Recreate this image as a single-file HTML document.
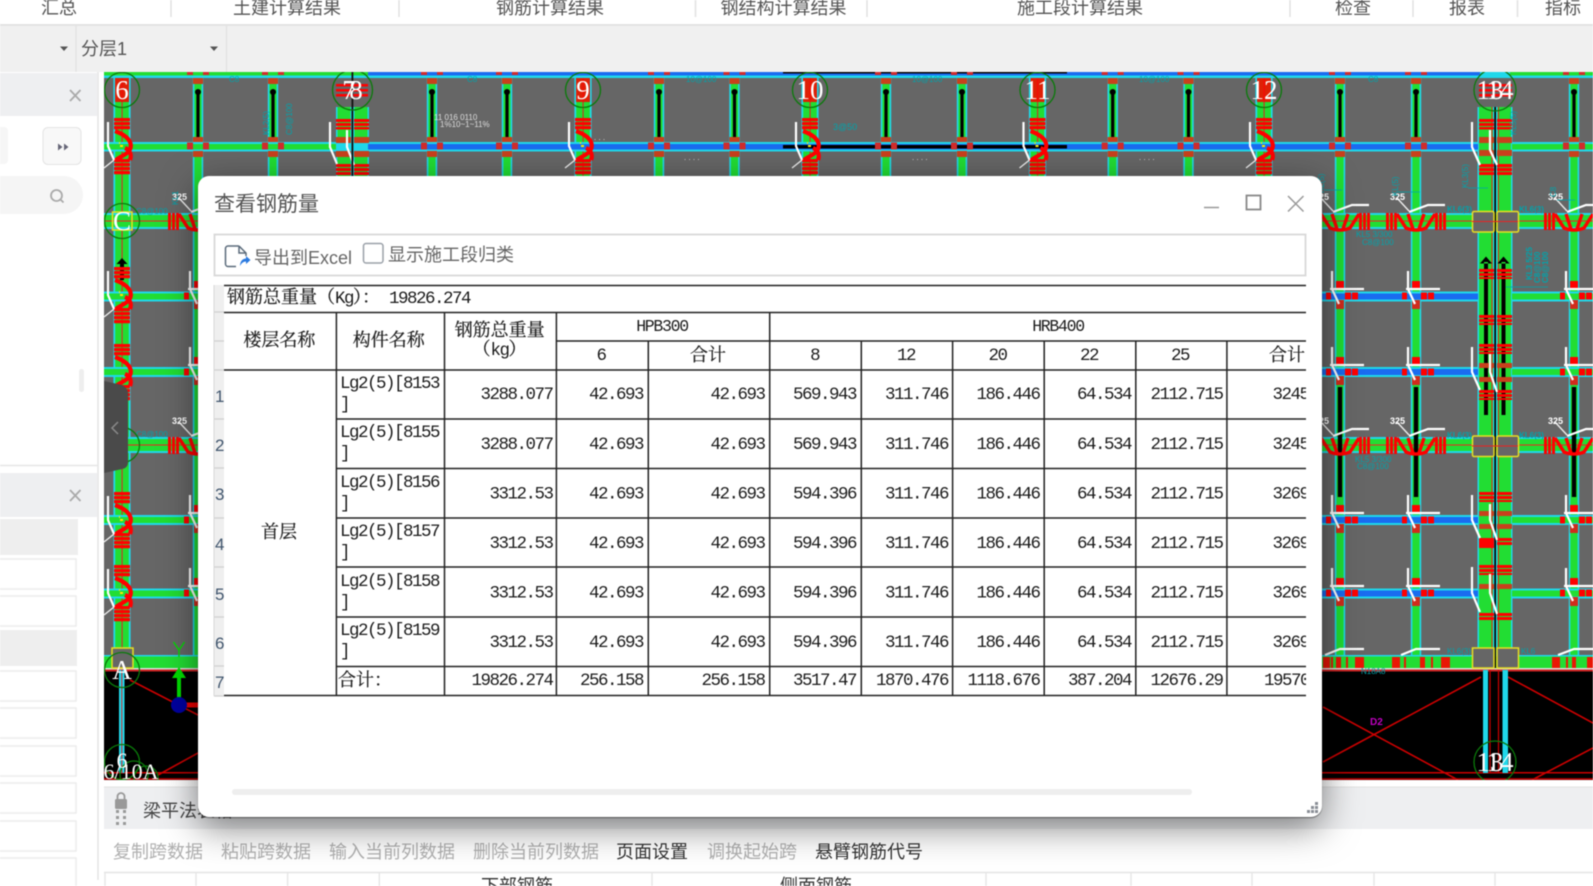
<!DOCTYPE html>
<html lang="zh-CN">
<head>
<meta charset="utf-8">
<title>查看钢筋量</title>
<style>
html,body{margin:0;padding:0;width:1593px;height:886px;overflow:hidden;background:#fff}
#root{position:relative;width:1593px;height:886px;overflow:hidden;filter:blur(.45px)}
svg.layer{position:absolute;left:0;top:0}
#dlg{position:absolute;left:198px;top:176px;width:1124px;height:641px;background:#fff;border-radius:11px;box-shadow:0 10px 36px rgba(0,0,0,.5),0 1px 1px rgba(0,0,0,.45)}
.ui{font-family:"Liberation Sans","Noto Sans CJK SC",sans-serif;font-size:18px}
.tab{fill:#555;text-anchor:middle}
.off{fill:#b0b0b0}.on{fill:#333}
.m{font-family:"Liberation Mono",monospace;font-size:17.5px;letter-spacing:-1.5px;fill:#1c1c1c}
.c{font-family:"Liberation Serif","Noto Serif CJK SC",serif;font-size:18px;fill:#222;stroke:#222;stroke-width:.25px}
.c .m{stroke:none}
.r{text-anchor:end}.mid{text-anchor:middle}
.ax{font-family:"Liberation Serif",serif;font-size:27px;fill:#fff;text-anchor:middle}
.ns{font-family:"Liberation Sans",sans-serif;font-size:8px;fill:#00a4ac}
.nw{font-family:"Liberation Sans",sans-serif;font-size:8px;fill:#ddd}
</style>
</head>
<body>
<div id="root">
<svg class="layer" width="1593" height="886" viewBox="0 0 1593 886">
<defs>
<clipPath id="cv"><rect x="104" y="72" width="1489" height="708"/></clipPath>
<g id="c"><rect x="-5.200" y="72" width="10.400" height="586" fill="#20d8ea"/><rect x="-3.600" y="72" width="7.200" height="586" fill="#22dd33"/></g>
<g id="a"><rect x="-8.600" y="72" width="17.200" height="586" fill="#20d8ea"/><rect x="-6.800" y="72" width="13.600" height="586" fill="#22dd33"/><rect x="-.4" y="72" width="1" height="586" fill="#d22"/><rect x="-7" y="74" width="14" height="28" fill="#f00" opacity=".85"/></g>
<g id="bar"><rect x="-1.600" y="92" width="3.200" height="47" fill="#000"/><circle cy="92" r="3" fill="#000"/><rect x="-5" y="78" width="10" height="6" fill="#c8401c"/><rect x="-5" y="137" width="10" height="5" fill="#c8401c"/><rect x="-5" y="151" width="10" height="6" fill="#c8401c"/></g>
<g id="j"><rect x="-11" y="-3.500" width="6" height="7" fill="#d02c2c"/><rect x="5" y="-3.500" width="6" height="7" fill="#d02c2c"/><rect x="-11" y="-74" width="6" height="3" fill="#d02c2c"/><rect x="5" y="-74" width="6" height="3" fill="#d02c2c"/></g>
<g id="s"><path d="M-8-28h16v3.200h-16zM-8-24h16v3.200h-16zM-8-20h16v3.200h-16zM-8 13h16v3.200h-16zM-8 17h16v3.200h-16zM-8 21h16v3.200h-16zM-8 25h16v3.200h-16z" fill="#f00"/><path d="M-7-15C9-9 11-1 7 5C3 10-4 11-7 15M8 14C10 9 8 4 3 2" fill="none" stroke="#f00" stroke-width="4.200"/></g>
<g id="h"><path d="M-14-24V0L-8 14" fill="none" stroke="#fff" stroke-width="2.200"/><path d="M-8 14L-18 22" stroke="#eee" stroke-width="1.400"/><path d="M-3-3h1M-2 0h3" stroke="#ffe800" stroke-width="2"/></g>
<g id="t"><path d="M-30-8h3v17h-3zM-26-8h3v17h-3zM-22-8h3v17h-3zM19-8h3v17h-3zM23-8h3v17h-3zM27-8h3v17h-3z" fill="#f00"/><path d="M-19-7L-10 7Q0 11 10 7L19-7M-8-7L-3 8M8-7L3 8" fill="none" stroke="#f00" stroke-width="3.400"/><path d="M-7-9L12-16H29" fill="none" stroke="#fff" stroke-width="2.200"/><path d="M-19-23L-7-10" stroke="#eee" stroke-width="1.400"/><text x="-26" y="-21" font-family="Liberation Sans,sans-serif" font-size="9" fill="#fff" font-weight="bold">325</text></g>
<g id="u"><rect x="-14" y="-3.500" width="5" height="7" fill="#f00"/><rect x="5" y="-3.500" width="6" height="7" fill="#f00"/><rect x="12" y="-3.500" width="6" height="7" fill="#f00"/><rect x="-4" y="-15" width="8" height="8" fill="#f00"/><rect x="-4" y="4" width="8" height="9" fill="#d02c1c"/><path d="M-8-25V-7L-1 8M-10-7H24" fill="none" stroke="#fff" stroke-width="2.200"/></g>
</defs>

<!-- top tabs -->
<rect width="1593" height="24" fill="#fff"/>
<g class="ui">
<text class="tab" x="59" y="14">汇总</text><text class="tab" x="287" y="14">土建计算结果</text><text class="tab" x="550" y="14">钢筋计算结果</text><text class="tab" x="783.500" y="14">钢结构计算结果</text><text class="tab" x="1080" y="14">施工段计算结果</text><text class="tab" x="1353" y="14">检查</text><text class="tab" x="1467" y="14">报表</text><text class="tab" x="1563" y="14">指标</text>
</g>
<path d="M171 0V17M399 0V17M695.500 0V17M867 0V17M1290 0V17M1413 0V17M1517.500 0V17" stroke="#e2e2e2" stroke-width="1.500"/>
<rect y="24" width="1593" height="2" fill="#e3e3e3"/>
<rect y="26" width="1593" height="46" fill="#f0f0f0"/>
<path d="M76 26V72M226.500 26V72" stroke="#e0e0e0" stroke-width="1.200"/>
<text class="ui" x="81" y="55" fill="#555">分层1</text>
<path d="M60 46.500h8l-4 4.500zM210 46.500h8l-4 4.500z" fill="#555"/>

<!-- left side -->
<rect y="72" width="104" height="814" fill="#fff"/>
<rect y="73" width="97" height="43" fill="#eeeff1"/>
<rect y="473" width="97" height="44" fill="#eeeff1"/>
<path d="M70 90l10.500 11M80.500 90L70 101M70 490l10.500 11M80.500 490L70 501" stroke="#aaa" stroke-width="1.800"/>
<rect x="-6" y="127" width="14" height="37" rx="4" fill="#f6f6f6"/>
<rect x="43" y="127.500" width="38" height="37" rx="5" fill="#f8f8f8" stroke="#e4e4e4"/>
<path d="M58 143.500l4.500 3.500-4.500 3.500zM64 143.500l4.500 3.500-4.500 3.500z" fill="#667"/>
<rect x="-20" y="176" width="103" height="38" rx="19" fill="#f5f5f5"/>
<circle cx="56.500" cy="195.500" r="5.500" fill="none" stroke="#aaa" stroke-width="1.800"/><path d="M60.500 199.500l3 3" stroke="#aaa" stroke-width="1.800"/>
<rect x="79" y="369" width="5" height="23" rx="2.500" fill="#eee"/>
<path d="M0 465.500H97.500M98 72V880" stroke="#e6e6e6" stroke-width="1.600"/>
<rect y="519" width="78" height="36" fill="#eee"/>
<rect y="630" width="77" height="36" fill="#eee"/>
<g fill="#fff" stroke="#ececec" stroke-width="1.500">
<rect x="-5" y="559" width="81" height="30"/><rect x="-5" y="596" width="81" height="30"/><rect x="-5" y="671" width="81" height="30"/><rect x="-5" y="708" width="81" height="30"/><rect x="-5" y="746" width="81" height="30"/><rect x="-5" y="783" width="81" height="30"/><rect x="-5" y="821" width="81" height="30"/><rect x="-5" y="858" width="81" height="40"/>
</g>

<!-- canvas -->
<g clip-path="url(#cv)">
<rect x="104" y="72" width="1489" height="708" fill="#000"/>
<rect x="104" y="72" width="1489" height="596" fill="#666"/>
<use href="#c" x="198"/><use href="#c" x="273"/><use href="#c" x="432"/><use href="#c" x="507"/><use href="#c" x="659"/><use href="#c" x="734.500"/><use href="#c" x="886"/><use href="#c" x="962"/><use href="#c" x="1112.700"/><use href="#c" x="1188.500"/><use href="#c" x="1340"/><use href="#c" x="1416"/><use href="#c" x="1574"/>
<use href="#a" x="122"/><use href="#a" x="583"/><use href="#a" x="810"/><use href="#a" x="1037.500"/><use href="#a" x="1264"/>
<!-- double columns -->
<rect x="336" y="107" width="16" height="565" fill="#20d8ea"/><rect x="353" y="107" width="16" height="565" fill="#20d8ea"/><rect x="337.500" y="107" width="13" height="565" fill="#22dd33"/><rect x="354.500" y="107" width="13" height="565" fill="#22dd33"/>
<rect x="1477.500" y="107" width="17" height="561" fill="#20d8ea"/><rect x="1496" y="107" width="16.500" height="561" fill="#20d8ea"/><rect x="1479" y="107" width="14" height="561" fill="#22dd33"/><rect x="1497.500" y="107" width="13.500" height="561" fill="#22dd33"/>
<rect x="1491.500" y="107" width="1" height="561" fill="#d22"/><rect x="1498" y="107" width="1" height="561" fill="#d22"/>

<!-- top beam -->
<rect x="104" y="72" width="1489" height="6" fill="#20d8ea"/>
<rect x="104" y="72" width="264" height="3.500" fill="#22dd33"/><rect x="368" y="72" width="1112" height="3.500" fill="#1a6cf0"/><rect x="1510" y="72" width="83" height="3.500" fill="#22dd33"/><rect x="783" y="72" width="284" height="1.500" fill="#000"/>
<!-- beam y146 -->
<rect x="104" y="142" width="1374" height="9.500" fill="#20d8ea"/><rect x="1512" y="142" width="81" height="9.500" fill="#20d8ea"/>
<rect x="104" y="144" width="232" height="5.500" fill="#22dd33"/><rect x="368" y="144" width="1110" height="5.500" fill="#1a6cf0"/><rect x="783" y="145" width="284" height="3.500" fill="#000"/><rect x="1512" y="144" width="81" height="5.500" fill="#22dd33"/>
<!-- row 221/445 -->
<rect x="104" y="213" width="1489" height="16" fill="#20d8ea"/><rect x="104" y="215" width="1489" height="12" fill="#22dd33"/><rect x="104" y="220.500" width="1489" height="1" fill="#e22"/>
<rect x="104" y="437" width="1489" height="16" fill="#20d8ea"/><rect x="104" y="439" width="1489" height="12" fill="#22dd33"/><rect x="104" y="444.500" width="1489" height="1" fill="#e22"/>
<!-- blue rows -->
<g>
<rect x="104" y="291.500" width="1374" height="10" fill="#20d8ea"/><rect x="1512" y="291.500" width="81" height="10" fill="#20d8ea"/><rect x="104" y="293.500" width="1218" height="6" fill="#22dd33"/><rect x="1322" y="293.500" width="156" height="6" fill="#1a6cf0"/><rect x="1512" y="293.500" width="81" height="6" fill="#22dd33"/>
<rect x="104" y="367" width="1374" height="10" fill="#20d8ea"/><rect x="1512" y="367" width="81" height="10" fill="#20d8ea"/><rect x="104" y="369" width="1218" height="6" fill="#22dd33"/><rect x="1322" y="369" width="156" height="6" fill="#1a6cf0"/><rect x="1512" y="369" width="81" height="6" fill="#22dd33"/>
<rect x="104" y="515" width="1374" height="10" fill="#20d8ea"/><rect x="1512" y="515" width="81" height="10" fill="#20d8ea"/><rect x="104" y="517" width="1218" height="6" fill="#22dd33"/><rect x="1322" y="517" width="156" height="6" fill="#1a6cf0"/><rect x="1512" y="517" width="81" height="6" fill="#22dd33"/>
<rect x="104" y="588.500" width="1374" height="10" fill="#20d8ea"/><rect x="1512" y="588.500" width="81" height="10" fill="#20d8ea"/><rect x="104" y="590.500" width="1218" height="6" fill="#22dd33"/><rect x="1322" y="590.500" width="156" height="6" fill="#1a6cf0"/><rect x="1512" y="590.500" width="81" height="6" fill="#22dd33"/>
</g>
<!-- bottom row -->
<rect x="104" y="655" width="1489" height="13" fill="#22dd33"/><rect x="104" y="655" width="1489" height="1.500" fill="#20d8ea"/>
<rect x="104" y="668" width="1489" height="1.500" fill="#ddd"/><rect x="104" y="669.500" width="1489" height="2" fill="#c22"/>
<path d="M1323 657h7v11h-7zM1331 657h2v11h-2zM1336 657h5v11h-5zM1346 657h2v11h-2zM1355 657h9v11h-9zM1392 657h8v11h-8zM1404 657h2v11h-2zM1420 657h5v11h-5zM1431 657h2v11h-2zM1441 657h9v11h-9zM1552 657h8v11h-8zM1566 657h2v11h-2zM1572 657h4v11h-4zM1587 657h6v11h-6z" fill="#f00" opacity=".9"/>

<!-- black bars -->
<use href="#bar" x="198"/><use href="#bar" x="273"/><use href="#bar" x="432"/><use href="#bar" x="507"/><use href="#bar" x="659"/><use href="#bar" x="734.500"/><use href="#bar" x="886"/><use href="#bar" x="962"/><use href="#bar" x="1112.700"/><use href="#bar" x="1188.500"/><use href="#bar" x="1340"/><use href="#bar" x="1416"/><use href="#bar" x="1574"/>
<use href="#j" x="432" y="146"/><use href="#j" x="507" y="146"/><use href="#j" x="659" y="146"/><use href="#j" x="734.500" y="146"/><use href="#j" x="886" y="146"/><use href="#j" x="962" y="146"/><use href="#j" x="1112.700" y="146"/><use href="#j" x="1188.500" y="146"/><use href="#j" x="1340" y="146"/><use href="#j" x="1416" y="146"/><use href="#j" x="1574" y="146"/><use href="#j" x="198" y="146"/><use href="#j" x="273" y="146"/>
<path d="M1337.800 387h4.400v110h-4.400zM1413.800 387h4.400v110h-4.400zM1571.800 387h4.400v110h-4.400z" fill="#000"/>
<path d="M122 258l-5.500 6h3.500v16h4v-16h3.500z" fill="#000"/>
<path d="M1484 262h4v153h-4zM1501.500 262h4v153h-4zM1486 256.500l-6 7h12zM1503.500 256.500l-6 7h12z" fill="#000"/>

<!-- stirrups on axes -->
<use href="#s" x="122" y="146"/><use href="#s" x="122" y="295"/><use href="#s" x="122" y="372"/><use href="#s" x="122" y="520"/><use href="#s" x="122" y="593"/>
<use href="#s" x="583" y="146"/><use href="#s" x="810" y="146"/><use href="#s" x="1037.500" y="146"/><use href="#s" x="1264" y="146"/>
<use href="#h" x="122" y="146"/><use href="#h" x="122" y="295"/><use href="#h" x="122" y="520"/><use href="#h" x="122" y="593"/>
<use href="#h" x="583" y="146"/><use href="#h" x="810" y="146"/><use href="#h" x="1037.500" y="146"/><use href="#h" x="1264" y="146"/>
<path d="M336 119h15v3h-15zM336 123h15v3h-15zM336 127h15v2.500h-15zM354 119h15v3h-15zM354 123h15v3h-15zM354 127h15v2.500h-15zM336 164h15v3h-15zM336 168h15v3h-15zM336 172h15v3h-15zM354 164h15v3h-15zM354 168h15v3h-15zM354 172h15v3h-15zM336 84h32v2.500h-32zM336 89h32v2.500h-32zM336 94h32v2.500h-32z" fill="#f00"/><path d="M336 137h15v6h-15zM354 137h15v6h-15zM336 151h15v6h-15zM354 151h15v6h-15z" fill="#c8401c"/>
<path d="M330 122V147L337 164M347 130V147L354 165" fill="none" stroke="#fff" stroke-width="2.200"/>
<rect x="351.500" y="72" width="1.800" height="106" fill="#111"/>
<!-- double col red bars -->
<path id="rb" d="M1479 119h15v3h-15zM1479 123h15v3h-15zM1479 127h15v2.500h-15zM1497 119h15v3h-15zM1497 123h15v3h-15zM1497 127h15v2.500h-15zM1479 164h15v3.200h-15zM1479 168h15v3.200h-15zM1479 172h15v3h-15zM1497 164h15v3.200h-15zM1497 168h15v3.200h-15zM1497 172h15v3h-15zM1479 269h15v3h-15zM1479 273h15v3h-15zM1479 277h15v2h-15zM1497 269h15v3h-15zM1497 273h15v3h-15zM1497 277h15v2h-15zM1479 315h15v3h-15zM1479 319h15v3h-15zM1479 323h15v2h-15zM1497 315h15v3h-15zM1497 319h15v3h-15zM1497 323h15v2h-15zM1479 344h15v3h-15zM1479 348h15v3h-15zM1479 352h15v2h-15zM1497 344h15v3h-15zM1497 348h15v3h-15zM1497 352h15v2h-15zM1479 390h15v3h-15zM1479 394h15v3h-15zM1479 398h15v2h-15zM1497 390h15v3h-15zM1497 394h15v3h-15zM1497 398h15v2h-15zM1479 492h15v3h-15zM1479 496h15v3h-15zM1479 500h15v2h-15zM1497 492h15v3h-15zM1497 496h15v3h-15zM1497 500h15v2h-15zM1479 538h15v10h-15zM1497 538h15v3h-15zM1497 542h15v3h-15zM1479 565h15v3h-15zM1479 569h15v3h-15zM1479 573h15v2h-15zM1497 565h15v3h-15zM1497 569h15v3h-15zM1497 573h15v2h-15zM1479 613h15v3h-15zM1479 617h15v3h-15zM1497 613h15v3h-15zM1497 617h15v3h-15zM1479 84h33v2.500h-33zM1479 89h33v2.500h-33zM1479 94h33v2.500h-33z" fill="#f00"/>
<path d="M1479 137h15v6h-15zM1497 137h15v6h-15zM1479 150h15v6h-15zM1497 150h15v6h-15zM1479 363h15v5h-15zM1497 363h15v5h-15zM1479 377h15v5h-15zM1497 377h15v5h-15zM1479 511h15v5h-15zM1497 511h15v5h-15zM1479 524h15v5h-15zM1497 524h15v5h-15zM1479 584h15v5h-15zM1497 584h15v5h-15z" fill="#c8401c"/>
<rect x="1494.300" y="107" width="1.700" height="561" fill="#000"/>
<path d="M1472 122V147L1480 165M1490 130V150L1497 165M1472 347V372L1480 390M1490 354V372L1497 392M1472 495V520L1480 538M1490 504V520L1497 540M1472 567V593L1480 612M1490 574V593L1497 614" fill="none" stroke="#fff" stroke-width="2.200"/>

<!-- T patterns -->
<use href="#t" x="198" y="221"/><use href="#t" x="198" y="445"/>
<use href="#t" x="1340" y="221"/><use href="#t" x="1416" y="221"/><use href="#t" x="1574" y="221"/>
<use href="#t" x="1340" y="445"/><use href="#t" x="1416" y="445"/><use href="#t" x="1574" y="445"/>
<use href="#u" x="1340" y="296"/><use href="#u" x="1416" y="296"/><use href="#u" x="1574" y="296"/>
<use href="#u" x="1340" y="372"/><use href="#u" x="1416" y="372"/><use href="#u" x="1574" y="372"/>
<use href="#u" x="1340" y="520"/><use href="#u" x="1416" y="520"/><use href="#u" x="1574" y="520"/>
<use href="#u" x="1340" y="593"/><use href="#u" x="1416" y="593"/><use href="#u" x="1574" y="593"/>
<use href="#u" x="198" y="296"/><use href="#u" x="198" y="372"/><use href="#u" x="198" y="520"/><use href="#u" x="198" y="593"/>
<path d="M1325 655L1340 649H1364M1401 655L1416 649H1440M1558 655L1574 649H1593" fill="none" stroke="#fff" stroke-width="2.200"/>

<!-- yellow boxes -->
<g fill="#666" stroke="#e8e020" stroke-width="1.500">
<rect x="1472.500" y="211.500" width="21.500" height="20.500" rx="1.500"/><rect x="1497" y="211.500" width="21.500" height="20.500" rx="1.500"/>
<rect x="1472.500" y="436" width="21.500" height="20.500" rx="1.500"/><rect x="1497" y="436" width="21.500" height="20.500" rx="1.500"/>
<rect x="1472.500" y="648" width="21.500" height="20"/><rect x="1497" y="648" width="21.500" height="20"/>
<rect x="112" y="648" width="21" height="20"/>
</g>
<path d="M1472 221.500h46M1472 446h46" stroke="#e22" stroke-width="1"/>
<rect x="112.500" y="212" width="19.500" height="18" fill="none" stroke="#e8e020" stroke-width="1.500"/>

<!-- notes -->
<text class="ns" x="229" y="82">C8</text><text class="ns" x="467" y="82">C8</text>
<text class="ns" x="686" y="82">10@100</text><text class="ns" x="912" y="82">10@100</text><text class="ns" x="1139" y="82">10@100</text><text class="ns" x="1368" y="82">C8</text>
<text class="ns" transform="translate(269 135) rotate(-90)">KL2(5)</text><text class="ns" transform="translate(292 135) rotate(-90)">C8@100</text>
<text class="ns" transform="translate(1516 135) rotate(-90)">KL5(5)</text>
<text class="ns" x="136" y="214">C8@100</text>
<text class="ns" transform="translate(178 205) rotate(-90)">KL1</text>
<text class="ns" x="1447" y="212" font-weight="bold">KL6(3)</text><text class="ns" x="1519" y="212" font-weight="bold">KL6(3)</text>
<text class="ns" x="1356" y="237">KL5 3/300</text><text class="ns" x="1362" y="245">C8@100</text>
<text class="ns" transform="translate(1324 193) rotate(-90)">KL(5)</text><text class="ns" transform="translate(1398 196) rotate(-90)">KL(5)</text><text class="ns" transform="translate(1468 188) rotate(-90)">KL3(5)</text><text class="ns" transform="translate(1556 197) rotate(-90)">C8</text>
<path d="M1324 190h18M1398 192h22M1468 188h20M1557 200h18M1506 287h42" stroke="#00a4ac" stroke-width=".8" fill="none"/>
<text class="ns" transform="translate(1532 280) rotate(-90)" font-weight="bold">KL3 5/25</text><text class="ns" transform="translate(1540 283) rotate(-90)" font-weight="bold">C8@100</text><text class="ns" transform="translate(1548 283) rotate(-90)" font-weight="bold">C8@100</text>
<text class="ns" x="136" y="437">C8@100</text>
<text class="ns" x="1355" y="462">KL5 3/300</text><text class="ns" x="1357" y="469">C8@100</text>
<text class="ns" x="1447" y="438" font-weight="bold">KL6(3)</text><text class="ns" x="1519" y="438" font-weight="bold">KL6(3)</text>
<text class="ns" x="1447" y="654">KL6(3)</text><text class="ns" x="1521" y="654">KL6</text><text class="ns" x="1361" y="674">N18A8</text>
<text class="ns" x="833" y="130" style="font-size:9px">3@50</text>
<text class="nw" x="434" y="120">11 016 0110</text><text class="nw" x="440" y="127">1%10~1~11%</text><text class="nw" x="594" y="140">. . .</text><text class="nw" x="684" y="160">. . . .</text><text class="nw" x="912" y="160">. . . .</text><text class="nw" x="1139" y="160">. . . .</text>
<text x="1370" y="725" font-family="Liberation Sans,sans-serif" font-size="10" font-weight="bold" fill="#c000c0">D2</text>

<!-- black zone -->
<path d="M1323 707L1458 780M1323 762L1481 677M1508 677L1593 723M1532 780L1593 748M130 680L198 715M158 775L198 753" stroke="#c00" stroke-width="1.600" fill="none"/>
<path d="M104 772.700H1593M104 779H1593" stroke="#c00" stroke-width="1.500"/>
<rect x="1483" y="670" width="5" height="103" fill="#20d8ea"/><rect x="1502.500" y="670" width="5.500" height="103" fill="#20d8ea"/>
<path d="M1490 670V773M1498.500 670V773" stroke="#c00" stroke-width="1.200"/>
<rect x="119" y="670" width="5.500" height="103" fill="#20d8ea"/><rect x="121.300" y="670" width="1" height="103" fill="#d22"/>

<!-- gizmo -->
<rect x="177" y="676" width="4" height="24" fill="#0d0"/><path d="M179 667l7 11h-14z" fill="#0d0"/>
<path d="M173.500 642l5.500 8 5.500-8M179 650v7" stroke="#0d0" stroke-width="1.400" fill="none"/>
<rect x="186" y="702.500" width="14" height="5" fill="#e00"/>
<circle cx="179" cy="705" r="8" fill="#0000a0"/>

<!-- axis bubbles -->
<g fill="none" stroke="#0a7a0a" stroke-width="1.300">
<circle cx="122" cy="90" r="17.500"/><circle cx="352.500" cy="90" r="20"/><circle cx="583" cy="90" r="17.500"/><circle cx="810" cy="90" r="17.500"/><circle cx="1037.500" cy="90" r="17.500"/><circle cx="1264" cy="90" r="17.500"/><circle cx="1495" cy="90" r="21"/>
<circle cx="122" cy="221" r="17.500"/><circle cx="122" cy="445" r="17.500"/><circle cx="122" cy="670" r="17.500"/><circle cx="122" cy="762" r="17.500"/><circle cx="134" cy="775" r="14"/><circle cx="146" cy="778" r="12"/><circle cx="1495" cy="762" r="21"/>
</g>
<text class="ax" x="122" y="99">6</text><text class="ax" x="349" y="99">7</text><text class="ax" x="356" y="99">8</text><text class="ax" x="583" y="99">9</text><text class="ax" x="810" y="99">10</text><text class="ax" x="1037.500" y="99">11</text><text class="ax" x="1264" y="99">12</text><text class="ax" x="1490" y="99">13</text><text class="ax" x="1500" y="99">14</text>
<text class="ax" x="122" y="230">C</text><text class="ax" x="122" y="679">A</text><text class="ax" x="122" y="768" style="font-size:22px">6</text>
<text class="ax" x="131" y="779" style="font-size:22px">6/10A</text>
<text class="ax" x="1490" y="771">13</text><text class="ax" x="1500" y="771">14</text>

<!-- collapse tab -->
<path d="M104 381L122 385Q128 388 128 393V462Q128 468 122 469L104 473Z" fill="#4a4a4a"/>
<path d="M118 422l-6 6 6 6" fill="none" stroke="#8a8a8a" stroke-width="1.500"/>
</g>

<!-- bottom panel -->
<rect x="99" y="780" width="1494" height="106" fill="#fff"/>
<rect x="104" y="787" width="1489" height="42" fill="#eeeff1"/>
<path d="M104 787H1593" stroke="#e2e2e2"/>
<rect x="115" y="799" width="12" height="10" rx="1.500" fill="#999"/><path d="M117.500 799v-2.500a3.500 3.500 0 0 1 7 0V799" fill="none" stroke="#999" stroke-width="1.800"/>
<path d="M116 810h3v3h-3zM123 810h3v3h-3zM116 816h3v3h-3zM123 816h3v3h-3zM116 822h3v3h-3zM123 822h3v3h-3z" fill="#999"/>
<g class="ui">
<text x="143" y="817" fill="#444">梁平法表格</text>
<text class="off" x="113" y="858">复制跨数据</text><text class="off" x="221" y="858">粘贴跨数据</text><text class="off" x="329" y="858">输入当前列数据</text><text class="off" x="473" y="858">删除当前列数据</text>
<text class="on" x="616" y="858">页面设置</text><text class="off" x="707" y="858">调换起始跨</text><text class="on" x="815" y="858">悬臂钢筋代号</text>
<text x="481" y="892" fill="#333">下部钢筋</text><text x="780" y="892" fill="#333">侧面钢筋</text>
</g>
<path d="M104 872.500H1593" stroke="#e4e4e4" stroke-width="1.500"/>
<path d="M105 872V886M196 872V886M287.600 872V886M379.300 872V886M652 872V886M986 872V886M1131 872V886M1252 872V886M1374 872V886M1495 872V886" stroke="#e4e4e4" stroke-width="1.300"/>
</svg>

<div id="dlg"></div>

<svg class="layer" width="1593" height="886" viewBox="0 0 1593 886">
<text class="ui" x="214" y="211" style="font-size:21px" fill="#555">查看钢筋量</text>
<path d="M1204 207.500h15" stroke="#999" stroke-width="1.500"/>
<rect x="1246.500" y="195.500" width="14" height="14" fill="none" stroke="#888" stroke-width="1.800"/>
<path d="M1288 196l15.500 15.500M1303.500 196L1288 211.500" stroke="#999" stroke-width="1.500"/>

<rect x="214.500" y="234.500" width="1091" height="41" fill="#fff" stroke="#d8d8d8" stroke-width="1.800"/>
<path d="M239 246H228a2.500 2.500 0 0 0-2.500 2.500V264a2.500 2.500 0 0 0 2.500 2.500H236M239 246l7 7V256M239 246V253H246" fill="none" stroke="#5a6a7a" stroke-width="1.500"/>
<path d="M240 266c0-5 3-7.500 6-7.500V256l4.500 4-4.500 4v-2.500c-2.500 0-4.500 1.500-6 4.500z" fill="#2a7ae0"/>
<text class="ui" x="254" y="264" fill="#666">导出到Excel</text>
<rect x="363.500" y="243.500" width="19.500" height="19.500" rx="2.500" fill="#fff" stroke="#9aa0a8" stroke-width="1.500"/>
<text class="ui" x="388" y="261" fill="#666">显示施工段归类</text>

<!-- row header column -->
<rect x="214" y="285" width="10" height="411" fill="#efefef"/>
<path d="M214 312H224M214 341H224M214 370H224M214 419H224M214 468H224M214 518H224M214 567H224M214 617H224M214 666H224M214 696H224" stroke="#cfcfcf" stroke-width="1.200"/>
<path d="M214 285V696" stroke="#d8d8d8" stroke-width="1"/>
<g font-family="Liberation Sans,sans-serif" font-size="17" fill="#41566e">
<text x="215" y="402">1</text><text x="215" y="451">2</text><text x="215" y="500">3</text><text x="215" y="550">4</text><text x="215" y="600">5</text><text x="215" y="649">6</text><text x="215" y="688">7</text>
</g>

<svg x="224" y="280" width="1082" height="420" viewBox="224 280 1082 420">
<!-- grid -->
<g stroke="#222" stroke-width="1.500" fill="none">
<path d="M224 285.500H1306M224 312.500H1306M556 341H1306M224 370H1306M336 419H1306M336 468.500H1306M336 518H1306M336 567H1306M336 617H1306M336 666.500H1306M224 695.500H1306"/>
<path d="M336.400 312V696M444.500 312V696M556.400 312V696M648.300 341V696M769.700 312V696M861.300 341V696M952.600 341V696M1044.200 341V696M1135.800 341V696M1226.900 341V696"/>
</g>
<text class="c" x="227" y="303">钢筋总重量（<tspan class="m">Kg</tspan>）：<tspan class="m" dx="9">19826.274</tspan></text>
<text class="c mid" x="279.400" y="346">楼层名称</text><text class="c mid" x="388.800" y="346">构件名称</text>
<text class="c mid" x="499.700" y="336">钢筋总重量</text><text class="c mid" x="499.500" y="355">（<tspan class="m">kg</tspan>）</text>
<text class="m mid" x="662" y="331" style="font-size:16.500px;letter-spacing:-1.300px">HPB300</text><text class="m mid" x="1058" y="331" style="font-size:16.500px;letter-spacing:-1.300px">HRB400</text>
<g><text class="m mid" x="601" y="360">6</text><text class="m mid" x="814.600" y="360">8</text><text class="m mid" x="906" y="360">12</text><text class="m mid" x="997.500" y="360">20</text><text class="m mid" x="1089" y="360">22</text><text class="m mid" x="1180" y="360">25</text></g>
<text class="c mid" x="708" y="361">合计</text><text class="c mid" x="1287" y="361">合计</text>
<text class="c mid" x="279" y="538">首层</text>

<!-- name column -->
<g class="m" transform="translate(0 -1)">
<text x="340" y="389">Lg2(5)[8153</text><text x="340" y="410">]</text>
<text x="340" y="438">Lg2(5)[8155</text><text x="340" y="459">]</text>
<text x="340" y="488">Lg2(5)[8156</text><text x="340" y="509">]</text>
<text x="340" y="537">Lg2(5)[8157</text><text x="340" y="558">]</text>
<text x="340" y="587">Lg2(5)[8158</text><text x="340" y="608">]</text>
<text x="340" y="636">Lg2(5)[8159</text><text x="340" y="657">]</text>
</g>
<text class="c" x="338" y="686">合计：</text>

<!-- values -->
<g class="m r">
<text x="552.500" y="399">3288.077</text><text x="643" y="399">42.693</text><text x="764.500" y="399">42.693</text><text x="856" y="399">569.943</text><text x="948" y="399">311.746</text><text x="1039.500" y="399">186.446</text><text x="1131" y="399">64.534</text><text x="1222.500" y="399">2112.715</text>
<text x="552.500" y="449">3288.077</text><text x="643" y="449">42.693</text><text x="764.500" y="449">42.693</text><text x="856" y="449">569.943</text><text x="948" y="449">311.746</text><text x="1039.500" y="449">186.446</text><text x="1131" y="449">64.534</text><text x="1222.500" y="449">2112.715</text>
<text x="552.500" y="498.500">3312.53</text><text x="643" y="498.500">42.693</text><text x="764.500" y="498.500">42.693</text><text x="856" y="498.500">594.396</text><text x="948" y="498.500">311.746</text><text x="1039.500" y="498.500">186.446</text><text x="1131" y="498.500">64.534</text><text x="1222.500" y="498.500">2112.715</text>
<text x="552.500" y="548">3312.53</text><text x="643" y="548">42.693</text><text x="764.500" y="548">42.693</text><text x="856" y="548">594.396</text><text x="948" y="548">311.746</text><text x="1039.500" y="548">186.446</text><text x="1131" y="548">64.534</text><text x="1222.500" y="548">2112.715</text>
<text x="552.500" y="597.500">3312.53</text><text x="643" y="597.500">42.693</text><text x="764.500" y="597.500">42.693</text><text x="856" y="597.500">594.396</text><text x="948" y="597.500">311.746</text><text x="1039.500" y="597.500">186.446</text><text x="1131" y="597.500">64.534</text><text x="1222.500" y="597.500">2112.715</text>
<text x="552.500" y="647">3312.53</text><text x="643" y="647">42.693</text><text x="764.500" y="647">42.693</text><text x="856" y="647">594.396</text><text x="948" y="647">311.746</text><text x="1039.500" y="647">186.446</text><text x="1131" y="647">64.534</text><text x="1222.500" y="647">2112.715</text>
<text x="552.500" y="685">19826.274</text><text x="643" y="685">256.158</text><text x="764.500" y="685">256.158</text><text x="856" y="685">3517.47</text><text x="948" y="685">1870.476</text><text x="1039.500" y="685">1118.676</text><text x="1131" y="685">387.204</text><text x="1222.500" y="685">12676.29</text>
</g>
<g class="m">
<text x="1272.500" y="399">3245.384</text><text x="1272.500" y="449">3245.384</text><text x="1272.500" y="498.500">3269.837</text><text x="1272.500" y="548">3269.837</text><text x="1272.500" y="597.500">3269.837</text><text x="1272.500" y="647">3269.837</text><text x="1264" y="685">19570.116</text>
</g>
</svg>

<rect x="232" y="789" width="960" height="6" rx="3" fill="#eee"/>
<path d="M1315 802h3v3h-3zM1311 806h3v3h-3zM1315 806h3v3h-3zM1307 810h3v3h-3zM1311 810h3v3h-3zM1315 810h3v3h-3z" fill="#8a8f96"/>
</svg>
</div>
</body>
</html>
